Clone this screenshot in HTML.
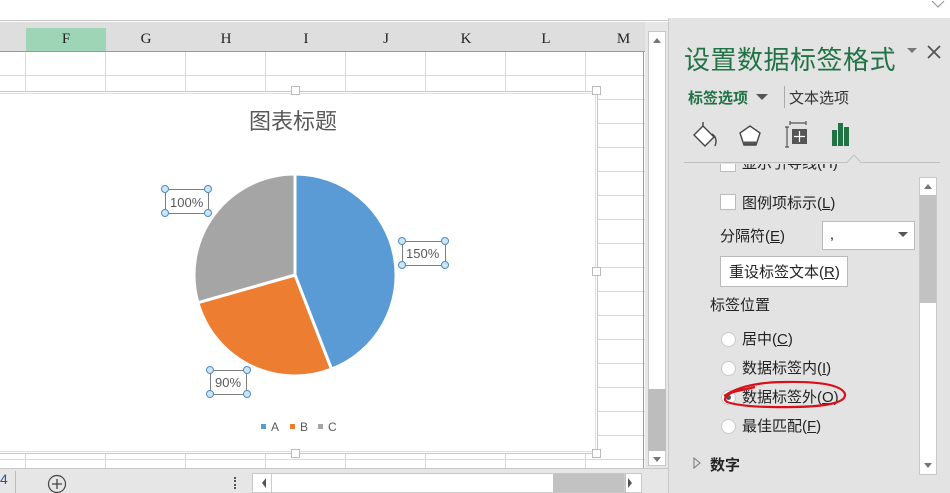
<!DOCTYPE html>
<html><head><meta charset="utf-8"><style>
*{margin:0;padding:0;box-sizing:border-box}
body{width:950px;height:493px;overflow:hidden;background:#fff;position:relative;font-family:"Liberation Sans","Noto Sans CJK SC",sans-serif}
.a{position:absolute}
.cj{font-family:"Liberation Sans","Noto Sans CJK SC",sans-serif}
.hd{font-family:"Liberation Serif","Noto Serif CJK SC",serif;font-size:15px;color:#222;text-align:center;top:31px}
.pt{color:#222;font-size:15px}
.rad{width:15px;height:15px;border-radius:50%;background:#fff;border:1px solid #c8c8c8}
</style></head><body>
<!-- top strip -->
<div class="a" style="left:0;top:0;width:950px;height:21px;background:#fff;border-bottom:1px solid #c6c6c6"></div>
<svg class="a" style="left:930px;top:0" width="16" height="10"><path d="M2 1 L8 7 L14 1" stroke="#999" fill="none" stroke-width="1.2"/></svg>
<!-- header row -->
<div class="a" style="left:0;top:22px;width:645px;height:30px;background:#dedede;border-bottom:1px solid #999"></div>
<div class="a" style="left:26px;top:28px;width:80px;height:23px;background:#9fd5b7"></div>
<div class="a hd" style="left:26px;width:80px">F</div>
<div class="a hd" style="left:106px;width:80px">G</div>
<div class="a hd" style="left:186px;width:80px">H</div>
<div class="a hd" style="left:266px;width:80px">I</div>
<div class="a hd" style="left:346px;width:80px">J</div>
<div class="a hd" style="left:426px;width:80px">K</div>
<div class="a hd" style="left:506px;width:80px">L</div>
<div class="a hd" style="left:586px;width:75px">M</div>
<!-- grid -->
<svg class="a" style="left:0;top:52px" width="645" height="416">
<g stroke="#d8d8d8" stroke-width="1">
<line x1="25.5" y1="0" x2="25.5" y2="416"/><line x1="105.5" y1="0" x2="105.5" y2="416"/><line x1="185.5" y1="0" x2="185.5" y2="416"/><line x1="265.5" y1="0" x2="265.5" y2="416"/><line x1="345.5" y1="0" x2="345.5" y2="416"/><line x1="425.5" y1="0" x2="425.5" y2="416"/><line x1="505.5" y1="0" x2="505.5" y2="416"/><line x1="585.5" y1="0" x2="585.5" y2="416"/>
<line x1="0" y1="23.5" x2="645" y2="23.5"/><line x1="0" y1="47.5" x2="645" y2="47.5"/><line x1="0" y1="71.5" x2="645" y2="71.5"/><line x1="0" y1="95.5" x2="645" y2="95.5"/><line x1="0" y1="119.5" x2="645" y2="119.5"/><line x1="0" y1="143.5" x2="645" y2="143.5"/><line x1="0" y1="167.5" x2="645" y2="167.5"/><line x1="0" y1="191.5" x2="645" y2="191.5"/><line x1="0" y1="215.5" x2="645" y2="215.5"/><line x1="0" y1="239.5" x2="645" y2="239.5"/><line x1="0" y1="263.5" x2="645" y2="263.5"/><line x1="0" y1="287.5" x2="645" y2="287.5"/><line x1="0" y1="311.5" x2="645" y2="311.5"/><line x1="0" y1="335.5" x2="645" y2="335.5"/><line x1="0" y1="359.5" x2="645" y2="359.5"/><line x1="0" y1="383.5" x2="645" y2="383.5"/><line x1="0" y1="407.5" x2="645" y2="407.5"/>
</g>
<line x1="643.5" y1="0" x2="643.5" y2="416" stroke="#999"/>
</svg>
<!-- chart -->
<div class="a" style="left:-2px;top:91px;width:600px;height:363px;background:#fff;border:1px solid #c8c8c8"></div>
<div class="a" style="left:-2px;top:93px;width:598px;height:359px;border:1px solid #e0e0e0"></div>
<div class="a" style="left:291px;top:86px;width:9px;height:9px;background:#fff;border:1px solid #bbb"></div>
<div class="a" style="left:592px;top:86px;width:9px;height:9px;background:#fff;border:1px solid #bbb"></div>
<div class="a" style="left:592px;top:267px;width:9px;height:9px;background:#fff;border:1px solid #bbb"></div>
<div class="a" style="left:291px;top:449px;width:9px;height:9px;background:#fff;border:1px solid #bbb"></div>
<div class="a" style="left:592px;top:449px;width:9px;height:9px;background:#fff;border:1px solid #bbb"></div>
<div class="a" style="left:249px;top:104px;font-size:22px;color:#595959">图表标题</div>
<svg class="a" style="left:0;top:0" width="600" height="460">
<g stroke="#fff" stroke-width="3">
<path d="M295 275 L295 174 A101 101 0 0 1 331.5 369.2 Z" fill="#5b9bd5"/>
<path d="M295 275 L331.5 369.2 A101 101 0 0 1 197.9 302.7 Z" fill="#ed7d31"/>
<path d="M295 275 L197.9 302.7 A101 101 0 0 1 295 174 Z" fill="#a5a5a5"/>
</g>
<g fill="none" stroke="#7f7f7f" stroke-width="1">
<rect x="165.5" y="189.5" width="43" height="24"/>
<rect x="402.5" y="241.5" width="43" height="24"/>
<rect x="210.5" y="370.5" width="36" height="24"/>
</g>
<g fill="#cde6f7" stroke="#4a8cc2" stroke-width="1">
<circle cx="165" cy="189" r="3.5"/><circle cx="208" cy="189" r="3.5"/><circle cx="165" cy="213" r="3.5"/><circle cx="208" cy="213" r="3.5"/>
<circle cx="402" cy="241" r="3.5"/><circle cx="445" cy="241" r="3.5"/><circle cx="402" cy="265" r="3.5"/><circle cx="445" cy="265" r="3.5"/>
<circle cx="210" cy="370" r="3.5"/><circle cx="247" cy="370" r="3.5"/><circle cx="210" cy="394" r="3.5"/><circle cx="247" cy="394" r="3.5"/>
</g>
<g font-size="13" fill="#595959" font-family="Liberation Sans">
<text x="170" y="207">100%</text><text x="406" y="258">150%</text><text x="215" y="387">90%</text>
</g>
<rect x="261" y="424" width="5" height="5" fill="#5b9bd5"/><text x="271" y="431" font-size="12" fill="#595959">A</text>
<rect x="290" y="424" width="5" height="5" fill="#ed7d31"/><text x="300" y="431" font-size="12" fill="#595959">B</text>
<rect x="318" y="424" width="5" height="5" fill="#a5a5a5"/><text x="328" y="431" font-size="12" fill="#595959">C</text>
</svg>
<!-- vertical scrollbar -->
<div class="a" style="left:645px;top:22px;width:23px;height:446px;background:#e6e6e6"></div>
<div class="a" style="left:648px;top:31px;width:18px;height:435px;background:#fff;border:1px solid #c8c8c8"></div>
<div class="a" style="left:648px;top:389px;width:18px;height:62px;background:#bdbdbd"></div>
<svg class="a" style="left:648px;top:31px" width="18" height="18"><path d="M5 12 L9 7 L13 12Z" fill="#777"/></svg>
<svg class="a" style="left:648px;top:451px" width="18" height="16"><path d="M5 6 L13 6 L9 11Z" fill="#777"/></svg>
<!-- bottom bar -->
<div class="a" style="left:0;top:468px;width:668px;height:25px;background:#e6e6e6;border-top:1px solid #c8c8c8"></div>
<div class="a" style="left:0;top:471px;font-size:14px;color:#2b579a">4</div>
<div class="a" style="left:15px;top:471px;width:1px;height:22px;background:#bbb"></div>
<svg class="a" style="left:47px;top:474px" width="22" height="19"><circle cx="10" cy="10" r="8.5" fill="none" stroke="#444" stroke-width="1.2"/><path d="M10 5V15M5 10H15" stroke="#444" stroke-width="1.3"/></svg>
<div class="a" style="left:234px;top:477px;width:1px;height:12px;border-left:2px dotted #555"></div>
<div class="a" style="left:252px;top:473px;width:390px;height:20px;background:#fff;border:1px solid #c8c8c8"></div>
<div class="a" style="left:553px;top:474px;width:73px;height:18px;background:#c2c2c2"></div>
<svg class="a" style="left:252px;top:473px" width="390" height="20"><path d="M10 10 L14 5 L14 15Z" fill="#555"/><path d="M380 10 L376 5 L376 15Z" fill="#555"/><line x1="19.5" y1="0" x2="19.5" y2="20" stroke="#ccc"/><line x1="372.5" y1="0" x2="372.5" y2="20" stroke="#ccc"/></svg>
<!-- right panel -->
<div class="a" style="left:668px;top:18px;width:282px;height:475px;background:#e3e3e3;border-left:1px solid #c8c8c8"></div>
<div class="a cj" style="left:684px;top:40px;font-size:26px;color:#217346;letter-spacing:0.5px">设置数据标签格式</div>
<svg class="a" style="left:906px;top:47px" width="12" height="8"><path d="M1 1 L11 1 L6 6Z" fill="#777"/></svg>
<svg class="a" style="left:926px;top:44px" width="16" height="16"><path d="M2 2 L14 14 M14 2 L2 14" stroke="#555" stroke-width="1.8"/></svg>
<div class="a cj" style="left:688px;top:87px;font-size:15px;color:#217346;font-weight:bold">标签选项</div>
<svg class="a" style="left:755px;top:93px" width="14" height="8"><path d="M1 1 L13 1 L7 7Z" fill="#555"/></svg>
<div class="a" style="left:784px;top:86px;width:1px;height:22px;background:#aaa"></div>
<div class="a cj" style="left:789px;top:87px;font-size:15px;color:#333">文本选项</div>
<!-- icons -->
<svg class="a" style="left:690px;top:120px" width="180" height="60">
<path d="M4 15 L13 6 L24 17 L15 26 Z" fill="#fff" stroke="#444" stroke-width="1.4"/><path d="M13 6 L13 2" stroke="#444" stroke-width="1.4"/><path d="M22 14 Q28 18 25 26" fill="none" stroke="#444" stroke-width="1.4"/>
<path d="M60 6 L70 13 L66 25 L54 25 L50 13 Z" fill="#fff" stroke="#444" stroke-width="1.4"/><path d="M54 23 L66 23" stroke="#555" stroke-width="3"/>
<path d="M97 7 L97 27 M95 7 L99 7 M95 27 L99 27 M100 3 L116 3 M100 1 L100 5 M116 1 L116 5" stroke="#555" stroke-width="1.2"/><rect x="102" y="9" width="15" height="15" fill="#555"/><path d="M109.5 11 V22 M104 16.5 H115" stroke="#fff" stroke-width="1.2"/>
<rect x="142" y="10" width="5" height="16" fill="#217346"/><rect x="148" y="3" width="5" height="23" fill="#217346"/><rect x="154" y="7" width="5" height="19" fill="#217346"/>
</svg>
<svg class="a" style="left:684px;top:150px" width="256" height="14"><path d="M0 12.5 L163 12.5 L170 5 L177 12.5 L256 12.5" fill="#e3e3e3" stroke="#c0c0c0"/></svg>
<!-- content -->
<div class="a" style="left:684px;top:164px;width:230px;height:16px;overflow:hidden">
<div class="a" style="left:36px;top:-8px;width:16px;height:16px;background:#fff;border:1px solid #bbb"></div>
<div class="a cj pt" style="left:58px;top:-12px">显示引导线(H)</div></div>
<div class="a" style="left:720px;top:194px;width:16px;height:16px;background:#fff;border:1px solid #bbb"></div>
<div class="a cj pt" style="left:742px;top:192px">图例项标示(<u>L</u>)</div>
<div class="a cj pt" style="left:720px;top:225px">分隔符(<u>E</u>)</div>
<div class="a" style="left:822px;top:221px;width:93px;height:29px;background:#fff;border:1px solid #bbb"></div>
<div class="a" style="left:830px;top:226px;font-size:14px">,</div>
<svg class="a" style="left:897px;top:231px" width="12" height="8"><path d="M1 1 L11 1 L6 6Z" fill="#555"/></svg>
<div class="a" style="left:720px;top:256px;width:128px;height:31px;background:#fff;border:1px solid #bbb"></div>
<div class="a cj pt" style="left:729px;top:261px">重设标签文本(<u>R</u>)</div>
<div class="a cj pt" style="left:710px;top:294px">标签位置</div>
<div class="a rad" style="left:721px;top:332px"></div><div class="a cj pt" style="left:742px;top:328px">居中(<u>C</u>)</div>
<div class="a rad" style="left:721px;top:361px"></div><div class="a cj pt" style="left:742px;top:357px">数据标签内(<u>I</u>)</div>
<div class="a rad" style="left:721px;top:390px"></div><div class="a" style="left:726px;top:395px;width:5px;height:5px;border-radius:50%;background:#555"></div><div class="a cj pt" style="left:742px;top:386px">数据标签外(<u>O</u>)</div>
<div class="a rad" style="left:721px;top:419px"></div><div class="a cj pt" style="left:742px;top:415px">最佳匹配(<u>F</u>)</div>
<svg class="a" style="left:715px;top:376px" width="135" height="36"><path d="M9 20 Q30 6 70 6 Q125 5 130 18 Q132 30 80 31 Q30 32 12 26 Q6 22 18 16 L40 11" fill="none" stroke="#d9101a" stroke-width="2.2"/></svg>
<svg class="a" style="left:692px;top:457px" width="10" height="12"><path d="M2 1 L8 6 L2 11Z" fill="none" stroke="#777"/></svg>
<div class="a cj" style="left:710px;top:454px;font-size:15px;font-weight:bold;color:#222">数字</div>
<!-- panel scrollbar -->
<div class="a" style="left:919px;top:177px;width:18px;height:298px;background:#fff;border:1px solid #c8c8c8"></div>
<div class="a" style="left:920px;top:195px;width:16px;height:108px;background:#c2c2c2"></div>
<svg class="a" style="left:919px;top:177px" width="18" height="18"><path d="M5 12 L9 7 L13 12Z" fill="#777"/></svg>
<svg class="a" style="left:919px;top:457px" width="18" height="16"><path d="M5 6 L13 6 L9 11Z" fill="#777"/></svg>
</body></html>
